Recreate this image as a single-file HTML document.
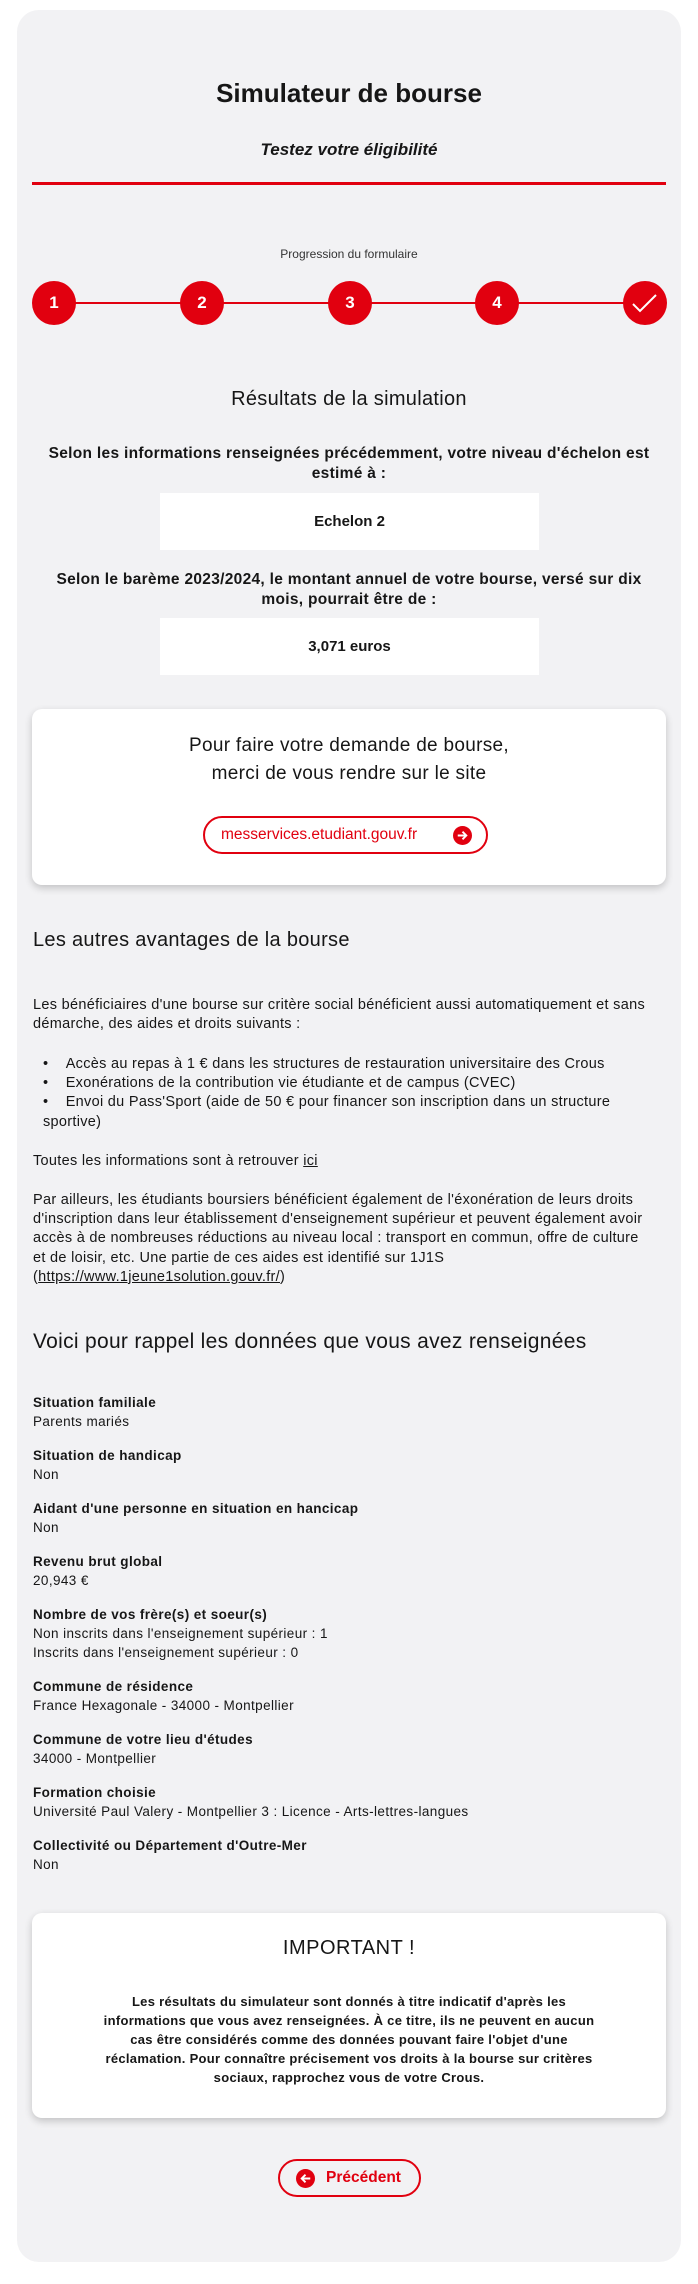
<!DOCTYPE html>
<html><head><meta charset="utf-8"><style>
*{margin:0;padding:0;box-sizing:border-box}
body{width:698px;height:2284px;background:#fff;font-family:"Liberation Sans",sans-serif;color:#161616;position:relative;overflow:hidden}
.card{position:absolute;left:17px;top:10px;width:664px;height:2252px;background:#f2f2f4;border-radius:22px}
.a{position:absolute;white-space:nowrap}
.c{left:0;width:698px;text-align:center}
.circ{position:absolute;top:281px;width:44px;height:44px;border-radius:50%;background:#e1000f;color:#fff;font-weight:bold;font-size:17px;line-height:44px;text-align:center}
.box{position:absolute;left:160px;width:379px;height:57px;background:#fff;text-align:center;line-height:57px;font-size:15px;font-weight:bold}
.w{position:absolute;left:32px;width:634px;background:#fff;border-radius:10px;box-shadow:0 3px 8px rgba(0,0,0,.2)}
.t{font-size:14.5px;line-height:19.2px;letter-spacing:0.3px}
.lab{font-weight:bold;font-size:13.5px;letter-spacing:0.4px}
.val{font-size:13.5px;letter-spacing:0.4px}
.bp{font-size:15.5px;font-weight:bold;line-height:20px;letter-spacing:0.3px}
</style></head><body>
<div class="card"></div>
<div class="a c" style="top:78px;font-size:26px;font-weight:bold">Simulateur de bourse</div>
<div class="a c" style="top:140px;font-size:17px;font-weight:bold;font-style:italic">Testez votre éligibilité</div>
<div class="a" style="left:32px;top:182px;width:634px;height:3px;background:#e1000f"></div>
<div class="a c" style="top:247px;font-size:12px;color:#333">Progression du formulaire</div>
<div class="a" style="left:54px;top:302px;width:590px;height:2px;background:#e1000f"></div>
<div class="circ" style="left:32px">1</div>
<div class="circ" style="left:180px">2</div>
<div class="circ" style="left:328px">3</div>
<div class="circ" style="left:475px">4</div>
<div class="circ" style="left:623px"><svg width="44" height="44" viewBox="0 0 44 44"><path d="M10 23l7 7 16-16" stroke="#fff" stroke-width="2" fill="none"/></svg></div>
<div class="a c" style="top:388px;font-size:20px;letter-spacing:0.3px">Résultats de la simulation</div>
<div class="a c bp" style="top:444px">Selon les informations renseignées précédemment, votre niveau d'échelon est<br>estimé à :</div>
<div class="box" style="top:493px">Echelon 2</div>
<div class="a c bp" style="top:570px">Selon le barème 2023/2024, le montant annuel de votre bourse, versé sur dix<br>mois, pourrait être de :</div>
<div class="box" style="top:618px">3,071 euros</div>
<div class="w" style="top:709px;height:176px">
<div style="position:absolute;top:23px;width:634px;text-align:center;font-size:19px;line-height:28px;letter-spacing:0.3px">Pour faire votre demande de bourse,<br>merci de vous rendre sur le site</div>
<div style="position:absolute;left:171px;top:107px;width:285px;height:38px;border:2px solid #e1000f;border-radius:19px;color:#e1000f;font-size:15.5px;line-height:34px;padding-left:16px">messervices.etudiant.gouv.fr
<svg style="position:absolute;right:14px;top:8px" width="19" height="19" viewBox="0 0 20 20"><circle cx="10" cy="10" r="10" fill="#e1000f"/><path d="M5 10h9M10 6l4 4-4 4" stroke="#fff" stroke-width="2" fill="none"/></svg></div>
</div>
<div class="a" style="left:33px;top:929px;font-size:20px;letter-spacing:0.3px">Les autres avantages de la bourse</div>
<div class="a t" style="left:33px;top:996px">Les bénéficiaires d'une bourse sur critère social bénéficient aussi automatiquement et sans<br>démarche, des aides et droits suivants :</div>
<div class="a t" style="left:33px;top:1055px">
<div style="padding-left:10px">•&nbsp;&nbsp;&nbsp;&nbsp;Accès au repas à 1 € dans les structures de restauration universitaire des Crous</div>
<div style="padding-left:10px">•&nbsp;&nbsp;&nbsp;&nbsp;Exonérations de la contribution vie étudiante et de campus (CVEC)</div>
<div style="padding-left:10px">•&nbsp;&nbsp;&nbsp;&nbsp;Envoi du Pass'Sport (aide de 50 € pour financer son inscription dans un structure</div>
<div style="padding-left:10px">sportive)</div>
</div>
<div class="a t" style="left:33px;top:1152px">Toutes les informations sont à retrouver <u>ici</u></div>
<div class="a t" style="left:33px;top:1191px">Par ailleurs, les étudiants boursiers bénéficient également de l'éxonération de leurs droits<br>d'inscription dans leur établissement d'enseignement supérieur et peuvent également avoir<br>accès à de nombreuses réductions au niveau local : transport en commun, offre de culture<br>et de loisir, etc. Une partie de ces aides est identifié sur 1J1S<br>(<u>https://www.1jeune1solution.gouv.fr/</u>)</div>
<div class="a" style="left:33px;top:1330px;font-size:21px;letter-spacing:0.3px">Voici pour rappel les données que vous avez renseignées</div>
<div class="a" style="left:33px;top:1393px;line-height:19px">
<div class="lab">Situation familiale</div><div class="val">Parents mariés</div>
<div class="lab" style="margin-top:15px">Situation de handicap</div><div class="val">Non</div>
<div class="lab" style="margin-top:15px">Aidant d'une personne en situation en hancicap</div><div class="val">Non</div>
<div class="lab" style="margin-top:15px">Revenu brut global</div><div class="val">20,943 €</div>
<div class="lab" style="margin-top:15px">Nombre de vos frère(s) et soeur(s)</div><div class="val">Non inscrits dans l'enseignement supérieur : 1</div><div class="val">Inscrits dans l'enseignement supérieur : 0</div>
<div class="lab" style="margin-top:15px">Commune de résidence</div><div class="val">France Hexagonale - 34000 - Montpellier</div>
<div class="lab" style="margin-top:15px">Commune de votre lieu d'études</div><div class="val">34000 - Montpellier</div>
<div class="lab" style="margin-top:15px">Formation choisie</div><div class="val">Université Paul Valery - Montpellier 3 : Licence - Arts-lettres-langues</div>
<div class="lab" style="margin-top:15px">Collectivité ou Département d'Outre-Mer</div><div class="val">Non</div>
</div>
<div class="w" style="top:1913px;height:205px">
<div style="position:absolute;top:24px;width:634px;text-align:center;font-size:20px;letter-spacing:0.5px">IMPORTANT !</div>
<div style="position:absolute;top:79px;left:0;width:634px;text-align:center;font-size:13px;font-weight:bold;line-height:19px;letter-spacing:0.3px">Les résultats du simulateur sont donnés à titre indicatif d'après les<br>informations que vous avez renseignées. À ce titre, ils ne peuvent en aucun<br>cas être considérés comme des données pouvant faire l'objet d'une<br>réclamation. Pour connaître précisement vos droits à la bourse sur critères<br>sociaux, rapprochez vous de votre Crous.</div>
</div>
<div class="a" style="left:278px;top:2159px;width:143px;height:38px;border:2px solid #e1000f;border-radius:19px;color:#e1000f;font-size:15.5px;font-weight:bold;line-height:34px;padding-left:46px">Précédent
<svg style="position:absolute;left:16px;top:8px" width="19" height="19" viewBox="0 0 20 20"><circle cx="10" cy="10" r="10" fill="#e1000f"/><path d="M15 10H6M10 6l-4 4 4 4" stroke="#fff" stroke-width="2" fill="none"/></svg></div>
</body></html>
